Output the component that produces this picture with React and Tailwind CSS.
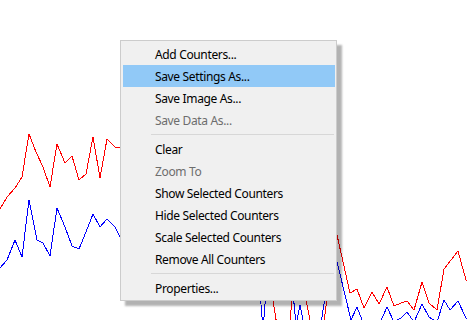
import React from "react";

const red = [
  [0, 209], [7, 197], [15, 188], [22, 177], [29, 134], [36, 152], [43, 167], [50, 187],
  [57, 144], [65, 163], [72, 156], [79, 180], [86, 174], [93, 137], [100, 178], [107, 139],
  [115, 147], [120, 147], [160, 150], [220, 150], [265, 250], [278, 332], [290, 330],
  [294, 250], [300, 230], [306, 300], [313, 335], [323, 330], [328, 290], [337, 235],
  [350, 293], [357, 289], [364, 308], [372, 292], [379, 304], [387, 287], [394, 306],
  [401, 303], [407, 301], [414, 310], [422, 282], [429, 303], [437, 310], [444, 269],
  [458, 251], [466, 280], [470, 281],
];

const blue = [
  [0, 268], [7, 260], [15, 240], [22, 257], [29, 200], [37, 240], [43, 243], [50, 256],
  [57, 208], [65, 227], [72, 246], [79, 249], [86, 232], [93, 214], [100, 227], [107, 219],
  [115, 227], [120, 237], [180, 240], [256, 240], [263, 330], [270, 240], [290, 260],
  [296, 325], [300, 305], [304, 325], [320, 330], [333, 245], [351, 320], [357, 307],
  [364, 325], [372, 322], [379, 325], [387, 307], [394, 322], [401, 318], [407, 312],
  [414, 322], [422, 304], [429, 317], [437, 322], [444, 300], [450, 310], [458, 301],
  [466, 318], [470, 320],
];

const toPoints = (pts) => pts.map(([x, y]) => `${x},${y}`).join(" ");

const items = [
  { label: "Add Counters..." },
  { label: "Save Settings As...", active: true },
  { label: "Save Image As..." },
  { label: "Save Data As...", disabled: true },
  { sep: true },
  { label: "Clear" },
  { label: "Zoom To", disabled: true },
  { label: "Show Selected Counters" },
  { label: "Hide Selected Counters" },
  { label: "Scale Selected Counters" },
  { label: "Remove All Counters" },
  { sep: true },
  { label: "Properties..." },
];

const App = () => {
  return (
    <div className="relative w-[467px] h-[320px] bg-white overflow-hidden font-['Noto_Sans',sans-serif]">
      {/* Chart lines */}
      <svg className="absolute inset-0" width="467" height="320" shapeRendering="crispEdges">
        <polyline points={toPoints(red)} fill="none" stroke="#ff0000" strokeWidth="1" />
        <polyline points={toPoints(blue)} fill="none" stroke="#0000ff" strokeWidth="1" />
      </svg>

      {/* Context menu */}
      <div className="absolute left-[120px] top-[40px] w-[217px] bg-[#f0f0f0] border border-[#cccccc] pt-[2px] pb-[1px] pl-[2px] pr-[1px] shadow-[5px_5px_2px_rgba(0,0,0,0.3)]">
        {items.map((item, i) =>
          item.sep ? (
            <div key={i} className="h-[7px] flex items-center pl-[28px] pr-[1px]">
              <div className="h-px w-full bg-[#d7d7d7]" />
            </div>
          ) : (
            <div
              key={i}
              className={
                item.active
                  ? "h-[22px] leading-[23px] pl-[32px] text-[12px] tracking-[-0.35px] bg-[#91c9f7] text-black"
                  : item.disabled
                  ? "h-[22px] leading-[23px] pl-[32px] text-[12px] tracking-[-0.35px] text-[#6d6d6d]"
                  : "h-[22px] leading-[23px] pl-[32px] text-[12px] tracking-[-0.35px] text-black"
              }
            >
              {item.label}
            </div>
          )
        )}
      </div>
    </div>
  );
};

export default App;
